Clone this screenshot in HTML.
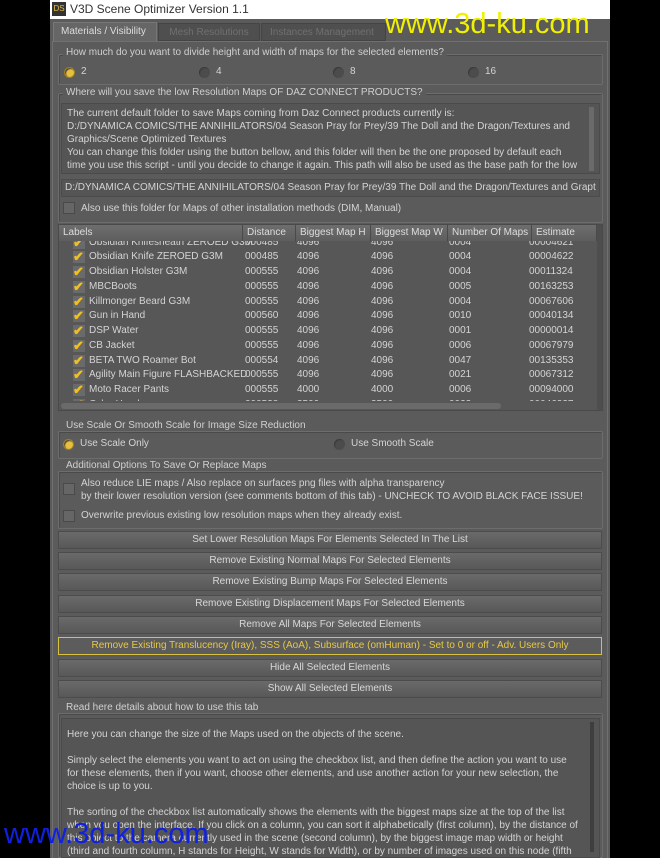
<!DOCTYPE html>
<html><head><meta charset="utf-8"><style>
*{box-sizing:border-box;margin:0;padding:0}
body{width:660px;height:858px;background:#000;position:relative;overflow:hidden;font-family:"Liberation Sans",sans-serif;font-size:10px;color:#d4d4d4}
.a{position:absolute}
#title{left:50px;top:0;width:560px;height:19px;background:#fff;color:#333;font-size:12px}
#win{left:50px;top:19px;width:560px;height:839px;background:#5b5b5b}
.grp{position:absolute;border:1px solid #6d6d6d;border-radius:2px;box-shadow:inset 1px 1px 0 #4a4a4a}
.lbl{position:absolute;background:#5b5b5b;padding:0 3px;color:#d0d0d0;white-space:nowrap}
.rad{position:absolute;width:11px;height:11px;border-radius:50%;background:#4c4c4c;box-shadow:inset 1px 1px 1px #3a3a3a}
.rad.on{background:#e8c040;border:1px solid #a08020}
.cb{position:absolute;width:12px;height:12px;background:#666;border:1px solid #4a4a4a}
.txt{position:absolute;white-space:nowrap}
.btn{position:absolute;left:8px;width:544px;height:18px;background:linear-gradient(#6a6a6a,#585858);border:1px solid #4c4c4c;text-align:center;line-height:16px;color:#d8d8d8;white-space:nowrap;font-size:10px}
.hl{border:1px solid #d8c040;color:#e8c846;background:#5c5c5c}
.th{position:absolute;top:0;height:16px;background:linear-gradient(#6e6e6e,#5e5e5e);border-right:1px solid #4a4a4a;line-height:16px;padding-left:4px;color:#ddd;white-space:nowrap;overflow:hidden}
.row{position:absolute;left:0;width:550px;height:15px;line-height:15px;white-space:nowrap}
.row span{position:absolute}
.ck{position:absolute;left:14px;top:2px;width:12px;height:12px;background:#6a6a6a;color:#f0c020;font-size:13px;line-height:11px;font-weight:bold}
.tab{position:absolute;white-space:nowrap;overflow:hidden}
</style></head><body>
<div class="a" id="title"><div class="a" style="left:2px;top:2px;width:14px;height:14px;background:#333;color:#e8c040;font-size:8px;line-height:14px;text-align:center">DS</div><div class="a" style="left:20px;top:2px;white-space:nowrap">V3D Scene Optimizer Version 1.1</div></div>
<div class="a" id="win">
<!-- tabs -->
<div class="tab" style="left:3px;top:3px;width:104px;height:19px;background:#666;border:1px solid #777;border-bottom:none;line-height:18px;padding-left:7px;color:#ddd">Materials / Visibility</div>
<div class="tab" style="left:108px;top:4px;width:102px;height:18px;background:#4f4f4f;line-height:17px;text-align:center;color:#707070;border:1px solid #444">Mesh Resolutions</div>
<div class="tab" style="left:211px;top:4px;width:125px;height:18px;background:#4f4f4f;line-height:17px;padding-left:8px;color:#707070;border:1px solid #444">Instances Management</div>
<div class="a" style="left:2px;top:22px;width:556px;height:817px;border:1px solid #707070;border-bottom:none"></div>
<!-- group 1 -->
<div class="grp" style="left:8px;top:35px;width:545px;height:31px"></div>
<div class="lbl" style="left:13px;top:28px">How much do you want to divide height and width of maps for the selected elements?</div>
<div class="rad on" style="left:14px;top:48px"></div><div class="txt" style="left:31px;top:47px">2</div>
<div class="rad" style="left:149px;top:48px"></div><div class="txt" style="left:166px;top:47px">4</div>
<div class="rad" style="left:283px;top:48px"></div><div class="txt" style="left:300px;top:47px">8</div>
<div class="rad" style="left:418px;top:48px"></div><div class="txt" style="left:435px;top:47px">16</div>
<!-- group 2 -->
<div class="grp" style="left:8px;top:74px;width:545px;height:130px"></div>
<div class="lbl" style="left:13px;top:68px">Where will you save the low Resolution Maps OF DAZ CONNECT PRODUCTS?</div>
<div class="a" style="left:11px;top:84px;width:539px;height:71px;background:#555;border:1px solid #4a4a4a;line-height:13px;padding:3px 0 0 5px;white-space:nowrap;overflow:hidden">The current default folder to save Maps coming from Daz Connect products currently is:<br>D:/DYNAMICA COMICS/THE ANNIHILATORS/04 Season Pray for Prey/39 The Doll and the Dragon/Textures and<br>Graphics/Scene Optimized Textures<br>You can change this folder using the button bellow, and this folder will then be the one proposed by default each<br>time you use this script - until you decide to change it again. This path will also be used as the base path for the low</div>
<div class="a" style="left:539px;top:88px;width:5px;height:64px;background:#6a6a6a"></div>
<div class="a" style="left:11px;top:160px;width:539px;height:18px;background:#555;border:1px solid #4c4c4c;line-height:16px;padding-left:3px;white-space:nowrap;overflow:hidden">D:/DYNAMICA COMICS/THE ANNIHILATORS/04 Season Pray for Prey/39 The Doll and the Dragon/Textures and Grapt ▼</div>
<div class="cb" style="left:13px;top:183px"></div><div class="txt" style="left:31px;top:184px">Also use this folder for Maps of other installation methods (DIM, Manual)</div>
<!-- table -->
<div class="a" style="left:8px;top:205px;width:545px;height:187px;background:#575757;border:1px solid #4a4a4a;overflow:hidden">
<div class="th" style="left:0;width:184px">Labels</div>
<div class="th" style="left:184px;width:53px">Distance</div>
<div class="th" style="left:237px;width:75px">Biggest Map H</div>
<div class="th" style="left:312px;width:77px">Biggest Map W</div>
<div class="th" style="left:389px;width:84px">Number Of Maps</div>
<div class="th" style="left:473px;width:65px">Estimate</div>
<div class="a" style="left:538px;top:0;width:7px;height:187px;background:#4e4e4e"></div>
<div class="a" style="left:0;top:16px;width:538px;height:160px;overflow:hidden">
<div class="row" style="top:-6px"><span class="ck">✔</span><span style="left:30px">Obsidian Knifesheath ZEROED G3M</span><span style="left:186px">000485</span><span style="left:238px">4096</span><span style="left:312px">4096</span><span style="left:390px">0004</span><span style="left:470px">00004621</span></div>
<div class="row" style="top:8px"><span class="ck">✔</span><span style="left:30px">Obsidian Knife ZEROED G3M</span><span style="left:186px">000485</span><span style="left:238px">4096</span><span style="left:312px">4096</span><span style="left:390px">0004</span><span style="left:470px">00004622</span></div>
<div class="row" style="top:23px"><span class="ck">✔</span><span style="left:30px">Obsidian Holster G3M</span><span style="left:186px">000555</span><span style="left:238px">4096</span><span style="left:312px">4096</span><span style="left:390px">0004</span><span style="left:470px">00011324</span></div>
<div class="row" style="top:38px"><span class="ck">✔</span><span style="left:30px">MBCBoots</span><span style="left:186px">000555</span><span style="left:238px">4096</span><span style="left:312px">4096</span><span style="left:390px">0005</span><span style="left:470px">00163253</span></div>
<div class="row" style="top:53px"><span class="ck">✔</span><span style="left:30px">Killmonger Beard G3M</span><span style="left:186px">000555</span><span style="left:238px">4096</span><span style="left:312px">4096</span><span style="left:390px">0004</span><span style="left:470px">00067606</span></div>
<div class="row" style="top:67px"><span class="ck">✔</span><span style="left:30px">Gun in Hand</span><span style="left:186px">000560</span><span style="left:238px">4096</span><span style="left:312px">4096</span><span style="left:390px">0010</span><span style="left:470px">00040134</span></div>
<div class="row" style="top:82px"><span class="ck">✔</span><span style="left:30px">DSP Water</span><span style="left:186px">000555</span><span style="left:238px">4096</span><span style="left:312px">4096</span><span style="left:390px">0001</span><span style="left:470px">00000014</span></div>
<div class="row" style="top:97px"><span class="ck">✔</span><span style="left:30px">CB Jacket</span><span style="left:186px">000555</span><span style="left:238px">4096</span><span style="left:312px">4096</span><span style="left:390px">0006</span><span style="left:470px">00067979</span></div>
<div class="row" style="top:112px"><span class="ck">✔</span><span style="left:30px">BETA TWO Roamer Bot</span><span style="left:186px">000554</span><span style="left:238px">4096</span><span style="left:312px">4096</span><span style="left:390px">0047</span><span style="left:470px">00135353</span></div>
<div class="row" style="top:126px"><span class="ck">✔</span><span style="left:30px">Agility Main Figure FLASHBACKED</span><span style="left:186px">000555</span><span style="left:238px">4096</span><span style="left:312px">4096</span><span style="left:390px">0021</span><span style="left:470px">00067312</span></div>
<div class="row" style="top:141px"><span class="ck">✔</span><span style="left:30px">Moto Racer Pants</span><span style="left:186px">000555</span><span style="left:238px">4000</span><span style="left:312px">4000</span><span style="left:390px">0006</span><span style="left:470px">00094000</span></div>
<div class="row" style="top:156px"><span class="ck">✔</span><span style="left:30px">CyberHead</span><span style="left:186px">000538</span><span style="left:238px">3500</span><span style="left:312px">3500</span><span style="left:390px">0023</span><span style="left:470px">00046327</span></div>
</div>
<div class="a" style="left:2px;top:178px;width:440px;height:6px;background:#6a6a6a;border-radius:3px"></div>
</div>
<!-- scale group -->
<div class="grp" style="left:8px;top:412px;width:545px;height:28px"></div>
<div class="lbl" style="left:13px;top:401px">Use Scale Or Smooth Scale for Image Size Reduction</div>
<div class="rad on" style="left:13px;top:420px"></div><div class="txt" style="left:30px;top:419px">Use Scale Only</div>
<div class="rad" style="left:284px;top:420px"></div><div class="txt" style="left:301px;top:419px">Use Smooth Scale</div>
<!-- additional -->
<div class="grp" style="left:8px;top:452px;width:545px;height:58px"></div>
<div class="lbl" style="left:13px;top:441px">Additional Options To Save Or Replace Maps</div>
<div class="cb" style="left:13px;top:464px"></div>
<div class="txt" style="left:31px;top:458px;line-height:13px">Also reduce LIE maps / Also replace on surfaces png files with alpha transparency<br>by their lower resolution version (see comments bottom of this tab) - UNCHECK TO AVOID BLACK FACE ISSUE!</div>
<div class="cb" style="left:13px;top:491px"></div><div class="txt" style="left:31px;top:491px">Overwrite previous existing low resolution maps when they already exist.</div>
<!-- buttons -->
<div class="btn" style="top:512px">Set Lower Resolution Maps For Elements Selected In The List</div>
<div class="btn" style="top:533px">Remove Existing Normal Maps For Selected Elements</div>
<div class="btn" style="top:554px">Remove Existing Bump Maps For Selected Elements</div>
<div class="btn" style="top:576px">Remove Existing Displacement Maps For Selected Elements</div>
<div class="btn" style="top:597px">Remove All Maps For Selected Elements</div>
<div class="btn hl" style="top:618px">Remove Existing Translucency (Iray), SSS (AoA), Subsurface (omHuman) - Set to 0 or off - Adv. Users Only</div>
<div class="btn" style="top:640px">Hide All Selected Elements</div>
<div class="btn" style="top:661px">Show All Selected Elements</div>
<!-- read here -->
<div class="grp" style="left:8px;top:694px;width:545px;height:145px"></div>
<div class="lbl" style="left:13px;top:683px">Read here details about how to use this tab</div>
<div class="a" style="left:11px;top:699px;width:539px;height:140px;background:#555;border:1px solid #4a4a4a;line-height:13px;padding:9px 0 0 5px;white-space:nowrap;overflow:hidden">Here you can change the size of the Maps used on the objects of the scene.<br><br>Simply select the elements you want to act on using the checkbox list, and then define the action you want to use<br>for these elements, then if you want, choose other elements, and use another action for your new selection, the<br>choice is up to you.<br><br>The sorting of the checkbox list automatically shows the elements with the biggest maps size at the top of the list<br>when you open the interface. If you click on a column, you can sort it alphabetically (first column), by the distance of<br>this object to the camera currently used in the scene (second column), by the biggest image map width or height<br>(third and fourth column, H stands for Height, W stands for Width), or by number of images used on this node (fifth</div>
<div class="a" style="left:540px;top:703px;width:4px;height:130px;background:#3e3e3e"></div>
</div>
<div class="a" style="left:385px;top:8px;font-size:29px;color:#f0f000;white-space:nowrap">www.3d-ku.com</div>
<div class="a" style="left:4px;top:818px;font-size:29px;color:#1020e0;white-space:nowrap">www.3d-ku.com</div>
</body></html>
